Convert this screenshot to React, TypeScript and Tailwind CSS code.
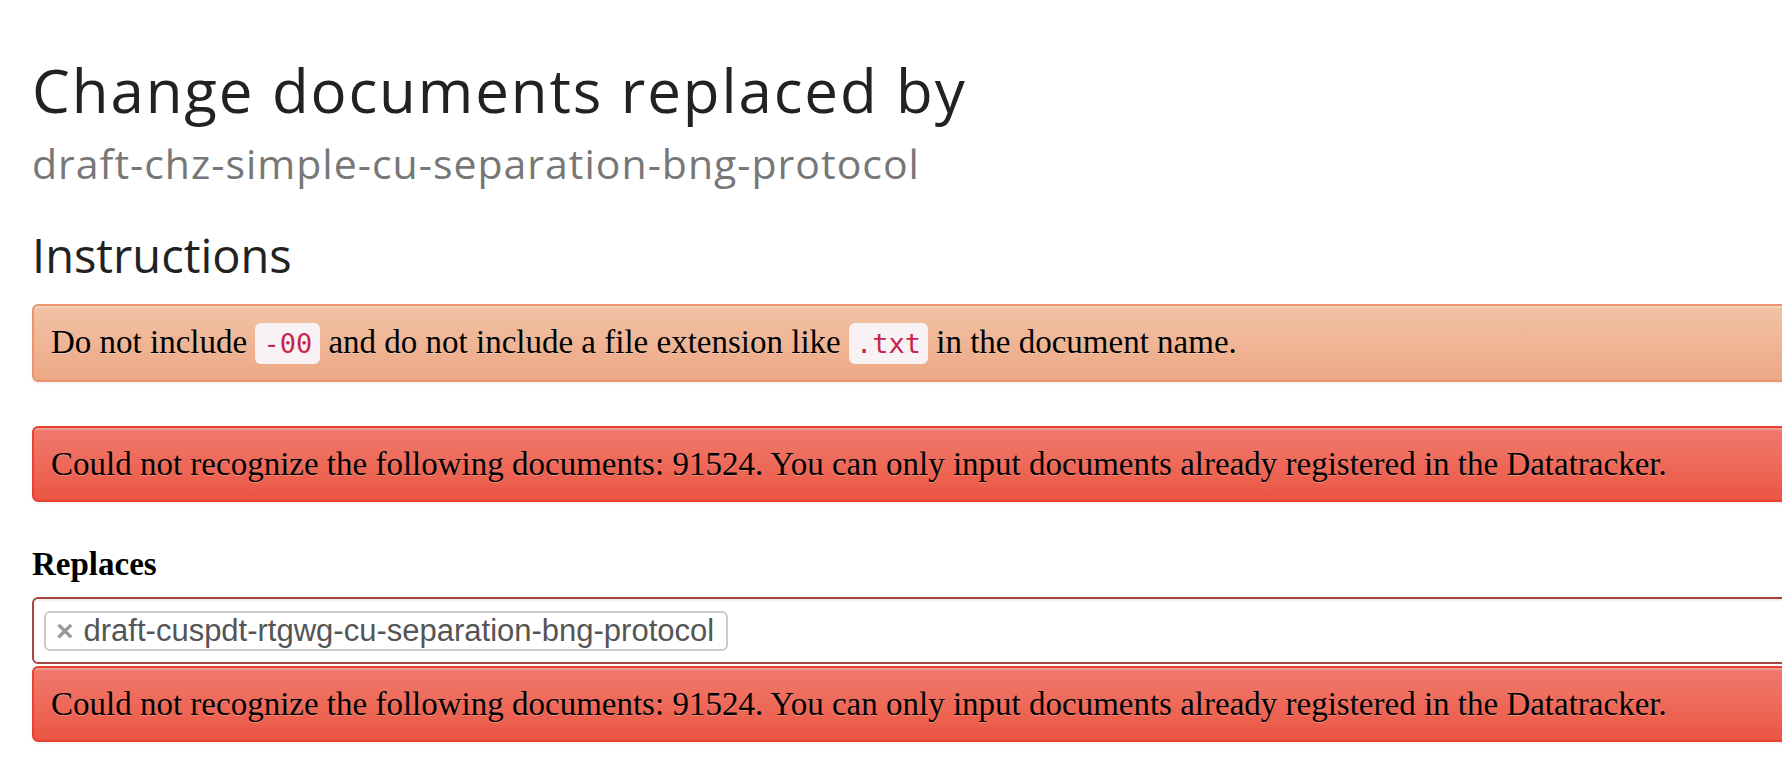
export default function App() {
  const serif = "font-['Liberation_Serif','Times_New_Roman',serif]";
  const alertText =
    "text-[33px] leading-[40px] text-black [text-shadow:0_1px_0_rgba(255,255,255,0.25)]";
  const redAlert =
    "flex items-center h-[76px] px-[17px] rounded-[6px] border-2 border-[#e8412f] bg-gradient-to-b from-[#f07b6e] to-[#eb5542] shadow-[inset_0_2px_0_rgba(255,255,255,0.25),0_2px_3px_rgba(0,0,0,0.05)]";

  return (
    <div className="min-h-[768px] w-full overflow-hidden bg-white">
      <div className="flex w-[1900px] flex-col pl-[32px]">
        <h1 className="mt-[58px] font-['Open_Sans',sans-serif] text-[60px] leading-[64px] tracking-[1.9px] text-[#222]">
          Change documents replaced by
        </h1>
        <div className="mt-[17px] font-['Open_Sans',sans-serif] text-[41px] leading-[48px] tracking-[1px] text-[#777]">
          draft-chz-simple-cu-separation-bng-protocol
        </div>
        <h2 className="mt-[40px] font-['Open_Sans',sans-serif] text-[47px] leading-[56px] text-[#222]">
          Instructions
        </h2>

        <div
          className={`mt-[21px] flex items-center h-[78px] px-[17px] rounded-[6px] border-2 border-[#e8946c] bg-gradient-to-b from-[#f2c2a6] to-[#eca884] shadow-[inset_0_2px_0_rgba(255,255,255,0.25),0_2px_3px_rgba(0,0,0,0.05)] ${serif} ${alertText}`}
        >
          <p>
            Do not include{" "}
            <code className="rounded-[6px] bg-[#f9f2f4] px-[8px] py-[5px] font-['DejaVu_Sans_Mono',monospace] text-[27px] text-[#c7254e] [text-shadow:none]">
              -00
            </code>{" "}
            and do not include a file extension like{" "}
            <code className="rounded-[6px] bg-[#f9f2f4] px-[7px] py-[5px] font-['DejaVu_Sans_Mono',monospace] text-[27px] text-[#c7254e] [text-shadow:none]">
              .txt
            </code>{" "}
            in the document name.
          </p>
        </div>

        <div className={`mt-[44px] ${redAlert} ${serif} ${alertText}`}>
          Could not recognize the following documents: 91524. You can only input
          documents already registered in the Datatracker.
        </div>

        <label className={`mt-[42px] text-[33px] font-bold leading-[40px] text-black ${serif}`}>
          Replaces
        </label>

        <div className="mt-[13px] flex h-[67px] items-center rounded-l-[6px] border-2 border-[#a94442] bg-white pl-[10px] shadow-[inset_0_2px_2px_rgba(0,0,0,0.075)]">
          <span className="flex h-[40px] items-center gap-[10px] rounded-[6px] border-2 border-[#ccc] bg-white pl-[10px] pr-[12px] font-['Liberation_Sans',Arial,sans-serif] text-[31px] text-[#555]">
            <span className="text-[30px] font-bold leading-none text-[#999]">×</span>
            <span className="leading-none">draft-cuspdt-rtgwg-cu-separation-bng-protocol</span>
          </span>
        </div>

        <div className={`mt-[2px] ${redAlert} ${serif} ${alertText}`}>
          Could not recognize the following documents: 91524. You can only input
          documents already registered in the Datatracker.
        </div>
      </div>
    </div>
  );
}
